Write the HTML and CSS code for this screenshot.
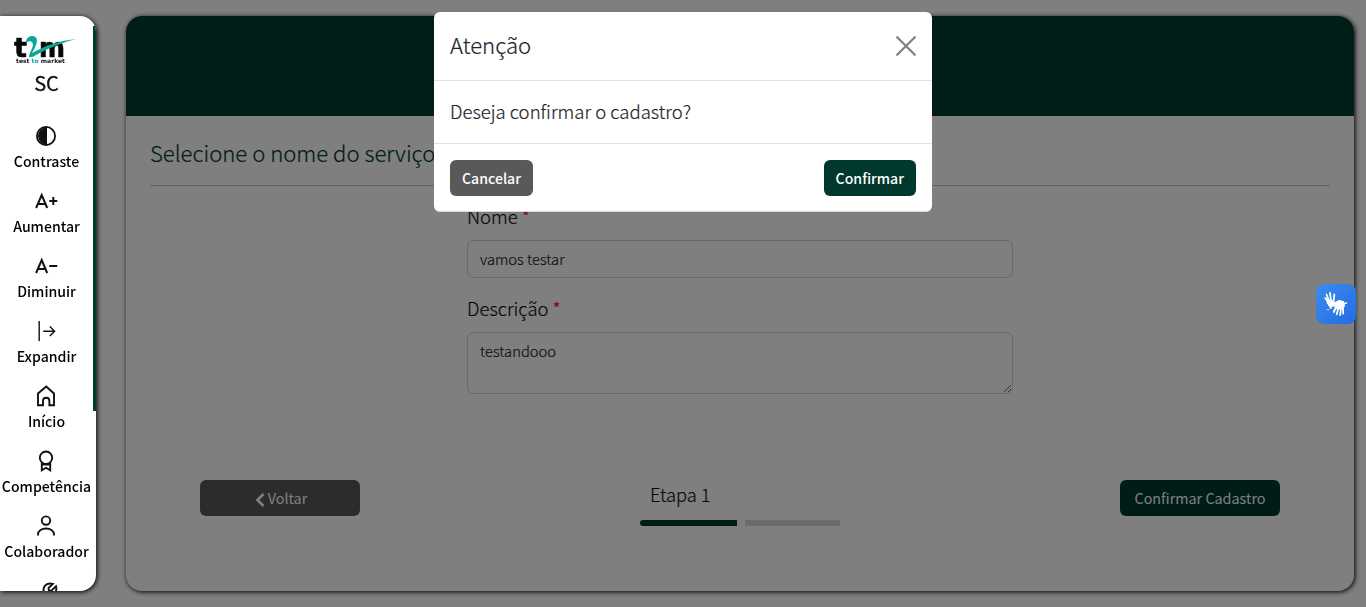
FILE: index.html
```html
<!DOCTYPE html>
<html lang="pt-BR">
<head>
<meta charset="utf-8">
<title>Cadastro de serviço</title>
<link rel="stylesheet" href="styles.css">
</head>
<body>
<div class="page">
  <main class="panel">
    <header class="panel-top"></header>
    <div class="panel-body">
      <h1 class="title">Selecione o nome do serviço</h1>
      <form class="form">
        <label class="label" for="nome">Nome <span class="required">*</span></label>
        <input class="field" id="nome" value="vamos testar">
        <label class="label" for="desc">Descrição <span class="required">*</span></label>
        <textarea class="field area" id="desc">testandooo</textarea>
      </form>
      <div class="actions">
        <button class="btn wide gray back"><svg width="10" height="14" viewBox="0 0 10 14" fill="none" stroke="currentColor" stroke-width="2.6"><path d="M8.5 1 2.5 7l6 6"/></svg><span>Voltar</span></button>
        <div class="step">
          <span class="step-name">Etapa 1</span>
          <div class="bars"><i class="bar done"></i><i class="bar"></i></div>
        </div>
        <button class="btn wide green">Confirmar Cadastro</button>
      </div>
    </div>
  </main>
</div>
<div class="backdrop"></div>
<aside class="sidebar">
  <svg class="logo" width="64" height="30" viewBox="0 0 64 30">
    <text class="logo-letter" x="0" y="21" textLength="13" lengthAdjust="spacingAndGlyphs">t</text>
    <text class="logo-letter" x="25" y="21" textLength="26" lengthAdjust="spacingAndGlyphs">m</text>
    <path d="M12 7C12 2 15 0 18 0c5 0 6 4 4 9-1 3-3 6-4 8C31 10 43 5 62 3 47 7 33 13 22 19c-3 2-4 2-7 2 0-4 3-7 4-12 0-4-4-5-7-2z" fill="#0aa898"/>
    <text class="logo-tag" x="2" y="27.2" textLength="49" lengthAdjust="spacingAndGlyphs">test <tspan class="logo-to">to</tspan> market</text>
  </svg>
  <div class="initials">SC</div>
  <nav class="menu">
    <a class="item"><svg class="icon" viewBox="0 0 24 24"><circle cx="12" cy="12" r="9.1" fill="none" stroke="#111" stroke-width="1.8"/><path d="M13 3v18a9 9 0 0 1 0-18z" fill="#111"/></svg><span>Contraste</span></a>
    <a class="item"><svg class="icon line" viewBox="0 0 24 24"><path class="thick" d="M2.1 19 7.7 6l5.5 13M3.9 15h7.6M15.3 12.1h8M19.3 8.1v8"/></svg><span>Aumentar</span></a>
    <a class="item"><svg class="icon line" viewBox="0 0 24 24"><path class="thick" d="M2.1 19 7.7 6l5.5 13M3.9 15h7.6M15.3 12.1h8"/></svg><span>Diminuir</span></a>
    <a class="item"><svg class="icon line" viewBox="0 0 24 24"><path class="thin" d="M5.2 2v20M9.2 12.2h11M15.8 7.4l4.8 4.8-4.8 4.8"/></svg><span>Expandir</span></a>
    <a class="item"><svg class="icon line" viewBox="0 0 24 24"><path d="M4 21.3V9.5L12.2 2.5 20 9.5v11.8h-4.6V17c0-4.4-6.4-4.4-6.4 0v4.3z"/></svg><span>Início</span></a>
    <a class="item"><svg class="icon line" viewBox="0 0 24 24"><circle cx="12" cy="8.7" r="6.2"/><path d="M7.8 13.5v7.8L12 18.8l4.2 2.5v-7.8M8 15.5h8"/></svg><span>Competência</span></a>
    <a class="item"><svg class="icon line" viewBox="0 0 24 24"><circle cx="12" cy="6.6" r="4.2"/><path d="M4 21.5v-1c0-8 16-8 16 0v1"/></svg><span>Colaborador</span></a>
    <a class="item"><svg class="icon line" viewBox="0 0 24 24"><path d="M4 22 10.8 14.5c-3.5-5.5 1-11.5 8-9.5l-4.3 4 .4 2.4 2.4.4L22 7.3c1.5 5-2 9-7 8.2L8 23"/></svg></a>
  </nav>
  <i class="thumb"></i>
</aside>
<button class="libras" aria-label="Libras">
  <svg width="40" height="40" viewBox="0 0 40 40" fill="none" stroke="#fff" stroke-linecap="round" stroke-linejoin="round">
    <path d="M11.5 18.5 14 16.5 17.5 18 18 21.5 14.5 22z" fill="#fff" stroke-width="2"/>
    <path d="M12 18 9.3 14M13 17 10.5 10.5M15 17 14 9M17.5 18 18.3 10.5M13 20.5 15 24" stroke-width="1.8"/>
    <path d="M19.5 20.5 23 17 27 18 28 22 25 24.5 19.5 24z" fill="#fff" stroke-width="2"/>
    <path d="M23 17 17 20M20 23.5 17.7 28M22.5 24 20.7 30.3M25 24 24.2 31M27 23 27.2 29.5M27 20 30.3 19" stroke-width="1.8"/>
    <path d="M11 25.5h2" stroke-width="1" opacity=".7"/>
  </svg>
</button>
<section class="modal" role="dialog">
  <header class="modal-head">
    <h2 class="modal-title">Atenção</h2>
    <svg class="close" width="20" height="20" viewBox="0 0 20 20" stroke="#7f7f7f" stroke-width="2.2" stroke-linecap="round"><path d="M1.2 1.2 18.8 18.8M18.8 1.2 1.2 18.8"/></svg>
  </header>
  <p class="modal-text">Deseja confirmar o cadastro?</p>
  <footer class="modal-foot">
    <button class="btn gray bold">Cancelar</button>
    <button class="btn green bold">Confirmar</button>
  </footer>
</section>
</body>
</html>
```

FILE: styles.css
```css
* { box-sizing: border-box; }
body {
  margin: 0;
  height: 607px;
  overflow: hidden;
  background: #fff;
  color: #111;
  font-family: "Noto Sans CJK JP", "Noto Sans CJK SC", sans-serif;
  font-size: 16px;
}
h1, h2, p { margin: 0; }
.page { height: 607px; padding: 16px 12px 16px 126px; }
.panel {
  height: 575px;
  border-radius: 16px;
  overflow: hidden;
  background: #fff;
  box-shadow: 1px 1px 5px #000;
}
.panel-top { height: 100px; background: #003c2f; }
.panel-body { padding: 0 24px; }
.title, .label, .field, .step-name, .modal-title, .modal-text { -webkit-text-stroke: .2px currentColor; }
.title {
  height: 70px;
  border-bottom: 1px solid #c4c4c4;
  font-weight: 300;
  font-size: 22.1px;
  line-height: 73px;
  color: #003c2f;
}
.form { width: 546px; margin: 16px auto 0; display: flex; flex-direction: column; }
.label { height: 38px; font-size: 18.5px; font-weight: 300; line-height: 29px; }
.required { color: #f00; }
.field {
  height: 38px;
  margin: 0 0 16px;
  padding: 0 12px 2px;
  border: 1px solid #ced4da;
  border-radius: 6px;
  font: 300 14.75px/24px "Noto Sans CJK JP", sans-serif;
  color: #212529;
  background: #fff;
}
.area { height: 62px; padding: 6px 12px; resize: vertical; }
.actions { display: flex; justify-content: space-between; align-items: flex-start; margin: 70px 50px 0; }
.btn {
  height: 36px;
  padding: 0 12px;
  border: 0;
  border-radius: 6px;
  color: #fff;
  font: 400 14.35px/36px "Noto Sans CJK JP", sans-serif;
}
.wide { width: 160px; display: flex; align-items: center; justify-content: center; gap: 3px; white-space: nowrap; }
.wide svg { margin-top: 4px; }
.back { padding-left: 14px; }
.green { background: #00382d; }
.gray { background: #595959; }
.bold { font-weight: 500; font-size: 14.1px; }
.step { width: 200px; }
.step-name { display: block; height: 40px; padding-left: 10px; font-weight: 300; font-size: 18.3px; line-height: 29px; }
.bars { display: flex; gap: 8px; }
.bar { height: 6px; width: 95px; background: #d4d4d4; }
.done { width: 97px; background: #003c2f; border-radius: 4px 0 0 4px; }
.backdrop { position: fixed; inset: 0; background: rgba(0, 0, 0, .5); }
.sidebar {
  position: fixed;
  left: 0;
  top: 16px;
  width: 96px;
  height: 575px;
  padding: 20px 3px 0 0;
  overflow: hidden;
  border-radius: 0 16px 16px 0;
  background: #fff;
  box-shadow: 1px 1px 5px #000;
}
.logo { display: block; margin-left: 14px; }
.logo-letter { font: bold 27px "DejaVu Sans", sans-serif; fill: #080808; stroke: #080808; stroke-width: .6px; }
.logo-tag { font: bold 6px "DejaVu Sans", sans-serif; fill: #111; }
.logo-to { fill: #0aa898; }
.initials { height: 36px; text-align: center; font-size: 20px; line-height: 34px; -webkit-text-stroke: .3px currentColor; }
.menu { display: flex; flex-direction: column; margin-top: 22px; }
.item {
  height: 65px;
  display: flex;
  flex-direction: column;
  align-items: center;
  font-size: 14.1px;
  font-weight: 500;
  line-height: 26px;
  color: #000;
  white-space: nowrap;
}
.icon { width: 24px; height: 24px; flex: none; margin-right: 1px; }
.line { fill: none; stroke: #111; stroke-width: 1.9; }
.thick { stroke-width: 2; }
.thin { stroke-width: 1.4; }
.thumb { position: absolute; right: 0; top: 10px; width: 3px; height: 385px; background: #003c2f; }
.libras {
  position: fixed;
  left: 1316px;
  top: 284px;
  width: 40px;
  height: 40px;
  padding: 0;
  border: 0;
  border-radius: 8px;
  background: linear-gradient(135deg, #3b8cf0, #246be2);
}
.libras svg { display: block; }
.modal {
  position: fixed;
  left: 434px;
  top: 12px;
  width: 498px;
  height: 200px;
  background: #fff;
  border-radius: 6px;
  border-bottom: 1px solid #d8d8d8;
}
.modal-head { height: 69px; display: flex; justify-content: space-between; align-items: center; padding: 0 16px; border-bottom: 1px solid #dee2e6; }
.modal-title { font-size: 22.1px; font-weight: 300; line-height: 32px; color: #212529; padding-bottom: 5px; }
.modal-text { height: 63px; padding: 0 16px; border-bottom: 1px solid #dee2e6; font-weight: 300; font-size: 18.55px; line-height: 60px; color: #212529; }
.modal-foot { display: flex; justify-content: space-between; padding: 16px; }
```
